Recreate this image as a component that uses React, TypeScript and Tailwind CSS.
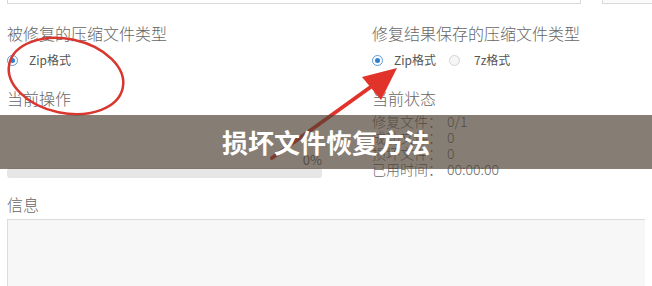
import React from "react";

function Radio({ checked }: { checked: boolean }) {
  return checked ? (
    <span className="flex h-[11px] w-[11px] shrink-0 items-center justify-center rounded-full border border-[#5b9bd5] bg-white">
      <span className="h-[5px] w-[5px] rounded-full bg-[#2f7fd0]" />
    </span>
  ) : (
    <span className="block h-[11px] w-[11px] shrink-0 rounded-full border border-[#d4d4d4] bg-[#f6f6f6]" />
  );
}

export default function App() {
  return (
    <div
      className="relative h-[286px] w-[652px] overflow-hidden bg-white text-[#666]"
      style={{ fontFamily: '"Noto Sans CJK SC", "Noto Sans", sans-serif' }}
    >
      {/* top inputs */}
      <div className="flex h-[4px]">
        <div className="ml-[7px] w-[574px] border border-t-0 border-[#d9d9d9] bg-white" />
        <div className="ml-[21px] flex-1 border border-t-0 border-r-0 border-[#d9d9d9] bg-[#fafafa]" />
      </div>

      <div className="flex px-[7px]">
        {/* left column */}
        <div className="flex w-[315px] flex-col">
          <div className="mt-[19px] h-[20px] text-[16px] font-light leading-[20px]">被修复的压缩文件类型</div>
          <div className="mt-[9px] flex h-[16px] items-center">
            <Radio checked />
            <span className="ml-[11px] text-[12px] text-[#555]">Zip格式</span>
          </div>
          <div className="mt-[20px] h-[20px] text-[16px] font-light leading-[20px]">当前操作</div>
          <div className="mt-[45px] flex h-[14px] justify-end text-[13px] leading-[14px]">0%</div>
          <div className="mt-[1px] h-[10px] rounded-[3px] bg-[#e6e6e6]" />
        </div>

        {/* right column */}
        <div className="ml-[50px] flex flex-col">
          <div className="mt-[19px] h-[20px] text-[16px] font-light leading-[20px]">修复结果保存的压缩文件类型</div>
          <div className="mt-[9px] flex h-[16px] items-center">
            <Radio checked />
            <span className="ml-[11px] text-[12px] text-[#555]">Zip格式</span>
            <span className="ml-[13px]">
              <Radio checked={false} />
            </span>
            <span className="ml-[14px] text-[12px] text-[#555]">7z格式</span>
          </div>
          <div className="mt-[20px] h-[20px] text-[16px] font-light leading-[20px]">当前状态</div>
          <div className="mt-[5px] flex flex-col text-[14px] font-light leading-[16px] text-[#666]">
            <div className="flex">
              <span className="w-[75px]">修复文件：</span>
              <span>0/1</span>
            </div>
            <div className="flex">
              <span className="w-[75px]">成功文件：</span>
              <span>0</span>
            </div>
            <div className="flex">
              <span className="w-[75px]">损坏文件：</span>
              <span>0</span>
            </div>
            <div className="flex">
              <span className="w-[75px]">已用时间：</span>
              <span>00:00:00</span>
            </div>
          </div>
        </div>
      </div>

      {/* info */}
      <div className="mt-[16px] px-[7px]">
        <div className="h-[20px] text-[16px] font-light leading-[20px]">信息</div>
        <div className="mt-[5px] h-[80px] border border-r-0 border-[#dcdcdc] bg-[#f7f7f7]" />
      </div>

      {/* red annotations */}
      <svg className="pointer-events-none absolute left-0 top-0" width="652" height="286" viewBox="0 0 652 286">
        <ellipse
          cx="66"
          cy="76"
          rx="58"
          ry="37"
          transform="rotate(12 66 76)"
          fill="none"
          stroke="#d9362f"
          strokeWidth="2.5"
        />
        <line x1="272" y1="158" x2="372" y2="86" stroke="#e2332b" strokeWidth="4" strokeLinecap="round" />
        <polygon points="397,68 362,77 381,100" fill="#e2332b" />
      </svg>

      {/* banner */}
      <div className="absolute left-0 top-[115px] flex h-[54px] w-full items-center justify-center bg-[rgba(76,65,52,0.68)]">
        <span className="text-[26px] font-bold leading-none text-white">损坏文件恢复方法</span>
      </div>
    </div>
  );
}
